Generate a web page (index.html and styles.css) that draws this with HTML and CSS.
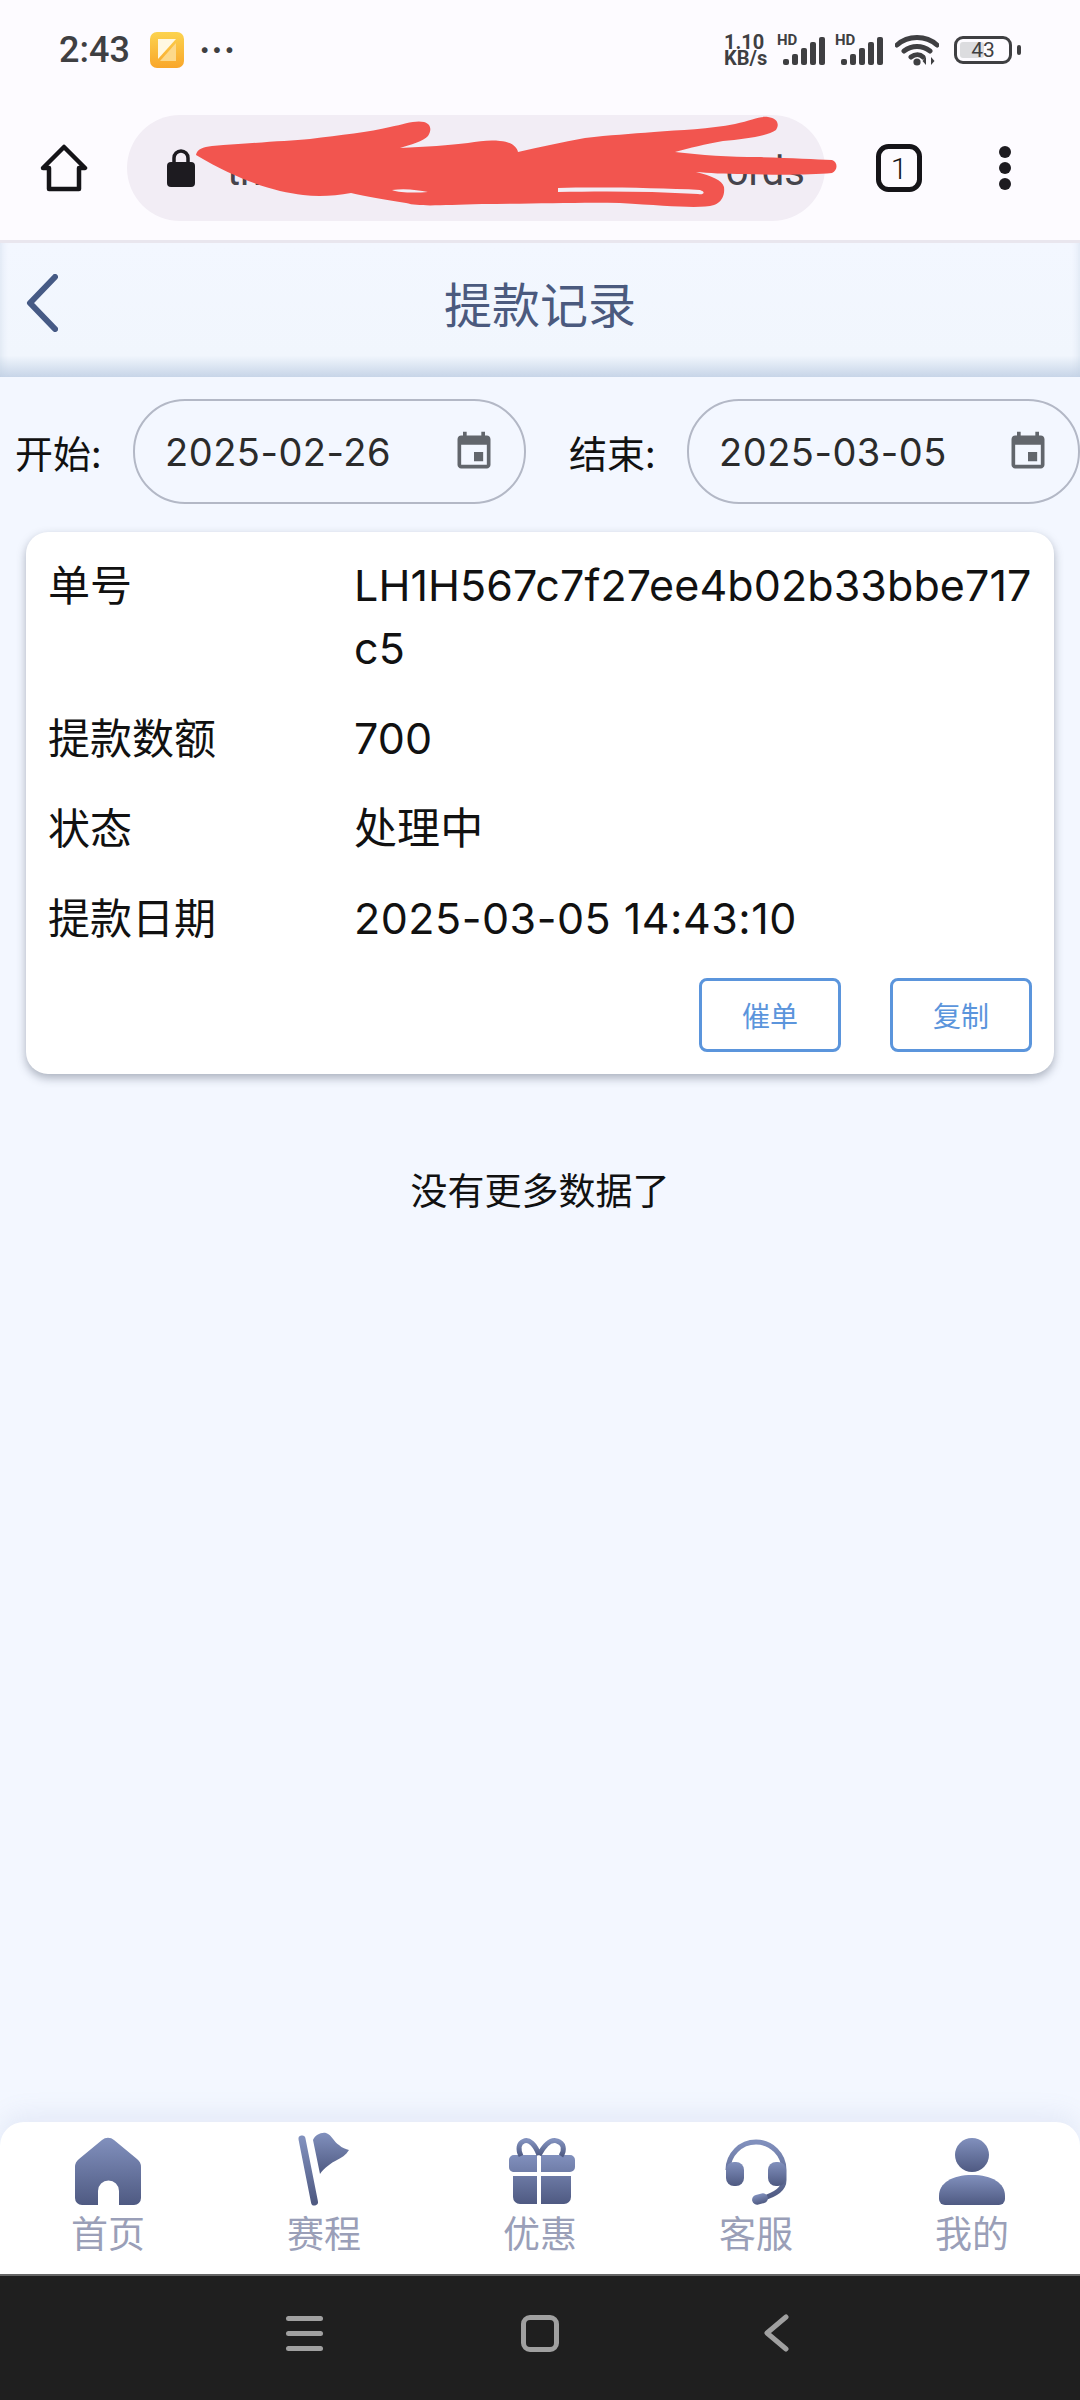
FILE: index.html
```html
<!DOCTYPE html>
<html lang="zh-CN">
<head>
  <meta charset="UTF-8" />
  <meta name="viewport" content="width=device-width, initial-scale=1.0"/>
  <title>提款记录</title>
  <link rel="stylesheet" href="styles.css">
</head>
<body>
  <!-- shared fill for the tab bar icons -->
  <svg class="defs" width="0" height="0">
    <defs>
      <linearGradient id="navFill" x1="0" y1="0" x2="0" y2="1">
        <stop offset="0" stop-color="#8190bd"/>
        <stop offset="1" stop-color="#4f5a82"/>
      </linearGradient>
      <linearGradient id="notesFill" x1="0" y1="0" x2="0" y2="1">
        <stop offset="0" stop-color="#fcd34f"/>
        <stop offset="1" stop-color="#f9a62a"/>
      </linearGradient>
    </defs>
  </svg>

  <div class="status-bar">
    <div class="status-left">
      <span class="time">2:43</span>
      <svg class="notes-icon" viewBox="0 0 34 36">
        <rect width="34" height="36" rx="7" fill="url(#notesFill)"/>
        <path d="M8 7h18L8 27z" fill="#fff8e2"/>
        <path d="M26 11v18H10z" fill="#fdd98a"/>
      </svg>
      <span class="more-dots">&middot;&middot;&middot;</span>
    </div>
    <div class="status-right">
      <div class="speed"><span>1.10</span><span>KB/s</span></div>
      <div class="signal">
        <span class="hd">HD</span>
        <svg viewBox="0 0 42 30" class="bars">
          <rect x="0" y="22" width="6" height="6" rx="2"/>
          <rect x="9" y="17" width="6" height="11" rx="2"/>
          <rect x="18" y="11" width="6" height="17" rx="2"/>
          <rect x="27" y="5" width="6" height="23" rx="2"/>
          <rect x="36" y="0" width="6" height="28" rx="2"/>
        </svg>
      </div>
      <div class="signal">
        <span class="hd">HD</span>
        <svg viewBox="0 0 42 30" class="bars">
          <rect x="0" y="22" width="6" height="6" rx="2"/>
          <rect x="9" y="17" width="6" height="11" rx="2"/>
          <rect x="18" y="11" width="6" height="17" rx="2"/>
          <rect x="27" y="5" width="6" height="23" rx="2"/>
          <rect x="36" y="0" width="6" height="28" rx="2"/>
        </svg>
      </div>
      <svg class="wifi" viewBox="0 0 44 32">
        <path d="M2 11C13 1 31 1 42 11M9 17c8-6 18-6 26 0M16 23c4-3 9-3 12 0" fill="none" stroke="#3f3f42" stroke-width="5" stroke-linecap="round"/>
        <circle cx="22" cy="28" r="3.6" fill="#3f3f42"/>
        <path d="M31 31v-8l-3.500 4zM36 23v8l3.500-4z" fill="#3f3f42"/>
      </svg>
      <div class="battery">
        <div class="battery-body">
          <span class="battery-level"></span>
          <span class="battery-num">43</span>
        </div>
        <span class="battery-nub"></span>
      </div>
    </div>
  </div>

  <div class="browser-bar">
    <svg class="browser-home" viewBox="0 0 48 48">
      <path d="M24 3 45 24H39V45H9V24H3Z" fill="none" stroke="#151418" stroke-width="4.500" stroke-linejoin="round"/>
    </svg>
    <div class="url-pill">
      <svg class="lock" viewBox="0 0 28 38">
        <path d="M7 15V9a7 7 0 0 1 14 0v6" fill="none" stroke="#1d1b20" stroke-width="3.500"/>
        <rect y="13" width="28" height="25" rx="4" fill="#1d1b20"/>
      </svg>
      <div class="url-text"><span>th</span><span>ords</span></div>
      <!-- marker scrawl over the address -->
      <svg class="scrawl" viewBox="0 115 1080 106">
        <path fill-rule="evenodd" fill="#f2554f" d="M196 155C197 149 203 147 212 146C250 143 285 141 310 139C340 135 370 132 390 127C405 124 415 120 424 122C431 124 432 130 428 136C424 141 410 145 400 148C425 147 450 145 468 143C480 141 490 140 500 141C512 142 517 147 518 152C540 147 562 142 585 138C610 135 630 134 654 132C680 130 710 129 735 124C752 120 760 116 768 117C777 118 780 124 776 130C768 136 745 139 723 141C705 144 690 148 675 152C700 155 730 157 758 157C790 158 815 159 832 160C838 162 838 170 832 173C810 175 775 175 744 174C725 174 708 173 696 172C712 176 722 180 724 187C725 195 722 202 714 205C700 209 670 206 620 203C580 202 530 204 482 204C440 205 420 207 406 203C385 200 365 196 351 193C335 196 318 197 303 195C275 192 240 181 196 155ZM558 188C600 187 660 188 700 190C706 192 704 195 698 194C650 191 600 191 558 192ZM392 190C405 188 418 190 428 192C415 193 400 193 392 190Z"/>
      </svg>
    </div>
    <svg class="tab-count" viewBox="0 0 46 48">
      <rect x="2.500" y="2.500" width="41" height="43" rx="10" fill="none" stroke="#151418" stroke-width="5"/>
      <text x="23" y="35" text-anchor="middle" class="tab-num">1</text>
    </svg>
    <div class="kebab"><span></span><span></span><span></span></div>
  </div>

  <header class="page-head">
    <svg class="back" viewBox="0 0 32 58">
      <path d="M29 3 4 29 29 55" fill="none" stroke="#465a85" stroke-width="6" stroke-linecap="round" stroke-linejoin="round"/>
    </svg>
    <h1>提款记录</h1>
  </header>

  <div class="filters">
    <label class="filter-label">开始:</label>
    <div class="date-box">
      <span>2025-02-26</span>
      <svg class="cal" viewBox="0 0 24 24"><path d="M17 12h-5v5h5v-5zM16 1v2H8V1H6v2H5c-1.110 0-1.990.9-1.990 2L3 19c0 1.100.89 2 2 2h14c1.100 0 2-.9 2-2V5c0-1.100-.9-2-2-2h-1V1h-2zm3 18H5V8h14v11z"/></svg>
    </div>
    <label class="filter-label second">结束:</label>
    <div class="date-box">
      <span>2025-03-05</span>
      <svg class="cal" viewBox="0 0 24 24"><path d="M17 12h-5v5h5v-5zM16 1v2H8V1H6v2H5c-1.110 0-1.990.9-1.990 2L3 19c0 1.100.89 2 2 2h14c1.100 0 2-.9 2-2V5c0-1.100-.9-2-2-2h-1V1h-2zm3 18H5V8h14v11z"/></svg>
    </div>
  </div>

  <div class="card">
    <div class="row"><div class="key">单号</div><div class="val">LH1H567c7f27ee4b02b33bbe717c5</div></div>
    <div class="row"><div class="key">提款数额</div><div class="val">700</div></div>
    <div class="row"><div class="key">状态</div><div class="val">处理中</div></div>
    <div class="row"><div class="key">提款日期</div><div class="val val-date">2025-03-05 14:43:10</div></div>
    <div class="actions">
      <button class="btn">催单</button>
      <button class="btn">复制</button>
    </div>
  </div>

  <div class="no-more">没有更多数据了</div>

  <nav class="tabbar">
    <a class="tab">
      <svg viewBox="0 0 66 67"><path fill="url(#navFill)" d="M27 2a9 9 0 0 1 12 0L62 21a10 10 0 0 1 4 8V60a7 7 0 0 1-7 7H44V53a10.500 10.500 0 0 0-21 0V67H7a7 7 0 0 1-7-7V29a10 10 0 0 1 4-8z"/></svg>
      <span>首页</span>
    </a>
    <a class="tab">
      <svg viewBox="0 0 66 67">
        <path fill="none" stroke="url(#navFill)" stroke-width="7" stroke-linecap="round" d="M11 1 23.500 64"/>
        <path fill="url(#navFill)" d="M22 2C24-3 30-6 35-5C41-3 43 4 48 7C51 10 55 11 58 12C55 17 50 20 46 22C40 25 33 30 29 36Z"/>
      </svg>
      <span>赛程</span>
    </a>
    <a class="tab">
      <svg viewBox="0 0 66 67">
        <path fill="url(#navFill)" d="M7 17H30V34H6a5 5 0 0 1-4-5V22a5 5 0 0 1 5-5zM34 17H63a5 5 0 0 1 5 5v7a5 5 0 0 1-5 5H34zM6 38H30V66H13a7 7 0 0 1-7-7zM34 38H64V59a7 7 0 0 1-7 7H34z"/>
        <path fill="none" stroke="url(#navFill)" stroke-width="5" d="M32 17C28 6 22 1 17 3C11 5 11 12 14 18M32 17C38 6 44 1 50 3C57 5 58 12 54 18"/>
      </svg>
      <span>优惠</span>
    </a>
    <a class="tab">
      <svg viewBox="0 0 66 67">
        <path fill="none" stroke="url(#navFill)" stroke-width="5" d="M5 32a28 28 0 0 1 56 0v10c0 9-8 15-24 19"/>
        <rect x="3" y="24" width="18" height="24" rx="8" fill="url(#navFill)"/>
        <rect x="45" y="24" width="18" height="24" rx="8" fill="url(#navFill)"/>
        <rect x="29" y="56" width="16" height="10" rx="5" transform="rotate(-15 37 61)" fill="url(#navFill)"/>
      </svg>
      <span>客服</span>
    </a>
    <a class="tab">
      <svg viewBox="0 0 66 67"><circle cx="33" cy="17" r="17" fill="url(#navFill)"/><path fill="url(#navFill)" d="M33 37c20 0 33 8 33 21v3a6 6 0 0 1-6 6H6a6 6 0 0 1-6-6v-3c0-13 13-21 33-21z"/></svg>
      <span>我的</span>
    </a>
  </nav>

  <div class="nav-bar">
    <div class="nav-menu"><span></span><span></span><span></span></div>
    <div class="nav-home"></div>
    <svg class="nav-back" viewBox="0 0 25 38"><path d="M22 3 3 19 22 35" fill="none" stroke="#a0a0a0" stroke-width="5" stroke-linecap="round" stroke-linejoin="round"/></svg>
  </div>
</body>
</html>
```

FILE: styles.css
```css
* {
  box-sizing: border-box;
}
html, body {
  margin: 0;
  padding: 0;
}
body {
  width: 1080px;
  height: 2400px;
  overflow: hidden;
  display: flex;
  flex-direction: column;
  background: #f3f7ff;
  color: #111;
  font-family: Inter, Roboto, "Noto Sans CJK SC", sans-serif;
}
.defs {
  position: absolute;
}

/* phone status bar */
.status-bar {
  height: 100px;
  padding: 0 59px;
  background: #fdfbff;
  display: flex;
  justify-content: space-between;
  align-items: center;
  color: #3f3f42;
}
.status-left {
  display: flex;
  align-items: center;
}
.time {
  font-size: 36px;
  font-weight: 500;
  font-family: Roboto, sans-serif;
  width: 91px;
}
.notes-icon {
  width: 34px;
  height: 36px;
}
.more-dots {
  margin-left: 15px;
  font-size: 34px;
  font-weight: 700;
  line-height: 1;
  letter-spacing: 1px;
}
.status-right {
  display: flex;
  align-items: center;
}
.speed {
  display: flex;
  flex-direction: column;
  width: 53px;
  font-family: Roboto, sans-serif;
  font-size: 20px;
  font-weight: 700;
  line-height: 16px;
}
.signal {
  position: relative;
  width: 48px;
  height: 34px;
  margin-right: 10px;
}
.hd {
  position: absolute;
  left: 0;
  top: 1px;
  font-family: Roboto, sans-serif;
  font-size: 15px;
  font-weight: 700;
  line-height: 13px;
}
.bars {
  position: absolute;
  right: 0;
  bottom: 0;
  width: 42px;
  height: 30px;
  fill: #3f3f42;
}
.wifi {
  width: 44px;
  height: 32px;
  margin-left: 2px;
}
.battery {
  display: flex;
  align-items: center;
  margin-left: 15px;
}
.battery-body {
  position: relative;
  width: 58px;
  height: 28px;
  border: 3px solid #3f3f42;
  border-radius: 9px;
  display: flex;
  align-items: center;
  justify-content: center;
}
.battery-level {
  position: absolute;
  left: 3px;
  top: 3px;
  bottom: 3px;
  width: 24px;
  background: #dcdcdf;
  border-radius: 3px;
}
.battery-num {
  position: relative;
  font-family: Roboto, sans-serif;
  font-size: 21px;
}
.battery-nub {
  width: 4px;
  height: 10px;
  margin-left: 5px;
  background: #3f3f42;
  border-radius: 2px;
}

/* browser toolbar */
.browser-bar {
  height: 143px;
  padding: 15px 0 19px 40px;
  background: #fdfbff;
  border-bottom: 3px solid #e9e6ee;
  display: flex;
  align-items: center;
}
.browser-home {
  width: 48px;
  height: 48px;
}
.url-pill {
  position: relative;
  width: 698px;
  height: 106px;
  margin-left: 39px;
  padding: 0 20px 0 40px;
  background: #f2edf5;
  border-radius: 53px;
  display: flex;
  align-items: center;
}
.lock {
  width: 28px;
  height: 38px;
  flex-shrink: 0;
}
.url-text {
  flex: 1;
  margin-left: 32px;
  padding-top: 6px;
  display: flex;
  justify-content: space-between;
  font-family: Roboto, sans-serif;
  font-size: 40px;
  color: #46444c;
}
.scrawl {
  position: absolute;
  left: -127px;
  top: 0;
  width: 1080px;
  height: 106px;
}
.tab-count {
  width: 46px;
  height: 48px;
  margin-left: 51px;
}
.tab-num {
  font-family: Roboto, sans-serif;
  font-size: 30px;
  font-weight: 300;
  fill: #151418;
}
.kebab {
  margin-left: 77px;
  display: flex;
  flex-direction: column;
  gap: 4px;
}
.kebab span {
  width: 12px;
  height: 12px;
  border-radius: 50%;
  background: #1d1b20;
  display: block;
}

/* page title */
.page-head {
  position: relative;
  height: 134px;
  background: linear-gradient(180deg, #f3f7ff 0, #f1f6fd 84%, #c7d5e8 100%);
  box-shadow: inset 8px 0 8px -8px rgba(190, 205, 225, 0.6), inset -8px 0 8px -8px rgba(190, 205, 225, 0.6);
  display: flex;
  align-items: center;
  justify-content: center;
  padding-bottom: 16px;
}
.page-head h1 {
  margin: 0;
  font-size: 48px;
  font-weight: 400;
  color: #4b5a7e;
}
.back {
  position: absolute;
  left: 26px;
  top: 31px;
  width: 32px;
  height: 58px;
}

/* date range */
.filters {
  height: 155px;
  padding: 22px 0 28px 15px;
  display: flex;
  align-items: center;
}
.filter-label {
  width: 118px;
  font-size: 38px;
  font-family: "Noto Sans CJK SC", sans-serif;
}
.filter-label.second {
  margin-left: 43px;
}
.date-box {
  width: 393px;
  height: 105px;
  flex-shrink: 0;
  padding: 0 28px 0 30px;
  border: 2px solid #b3b8c6;
  border-radius: 52px;
  display: flex;
  align-items: center;
  justify-content: space-between;
  font-size: 38px;
  letter-spacing: 0.5px;
  color: #2b2b2b;
}
.cal {
  width: 44px;
  height: 44px;
  fill: #62666c;
}

/* record card */
.card {
  margin: 0 26px;
  padding: 22px;
  background: #fff;
  border-radius: 22px;
  box-shadow: 0 4px 10px rgba(60, 70, 90, 0.4);
}
.row {
  display: flex;
  margin-bottom: 27px;
  font-size: 43px;
  line-height: 63px;
}
.key {
  width: 306px;
  flex-shrink: 0;
  font-size: 42px;
}
.val {
  flex: 1;
  word-break: break-all;
  letter-spacing: 0.1px;
}
.val-date {
  letter-spacing: 0.5px;
}
.actions {
  margin-top: 28px;
  display: flex;
  justify-content: flex-end;
  gap: 49px;
}
.btn {
  width: 142px;
  height: 74px;
  background: #fff;
  border: 3px solid #5b95dc;
  border-radius: 8px;
  color: #5b95dc;
  font-size: 28px;
  font-family: "Noto Sans CJK SC", sans-serif;
  padding: 0;
}
.no-more {
  margin-top: 92px;
  text-align: center;
  font-size: 37px;
  line-height: 52px;
}

/* bottom tabs */
.tabbar {
  margin-top: auto;
  height: 154px;
  padding-top: 16px;
  background: #fff;
  border-radius: 24px 24px 0 0;
  border-bottom: 2px solid #666;
  box-shadow: 0 -8px 24px rgba(120, 140, 190, 0.12);
  display: grid;
  grid-template-columns: repeat(5, 1fr);
}
.tab {
  display: flex;
  flex-direction: column;
  align-items: center;
  color: #9a9fb8;
  font-size: 37px;
  line-height: 50px;
}
.tab svg {
  height: 67px;
  width: 66px;
  overflow: visible;
}
.tab span {
  margin-top: 5px;
}

/* system navigation */
.nav-bar {
  height: 124px;
  background: #1f1f1f;
  display: flex;
  align-items: center;
  padding-left: 286px;
  padding-bottom: 10px;
}
.nav-menu {
  width: 37px;
  display: flex;
  flex-direction: column;
  gap: 10px;
}
.nav-menu span {
  display: block;
  height: 5px;
  background: #a0a0a0;
  border-radius: 3px;
}
.nav-home {
  width: 38px;
  height: 37px;
  margin-left: 198px;
  border: 5px solid #a0a0a0;
  border-radius: 9px;
}
.nav-back {
  width: 25px;
  height: 38px;
  margin-left: 205px;
}
```
